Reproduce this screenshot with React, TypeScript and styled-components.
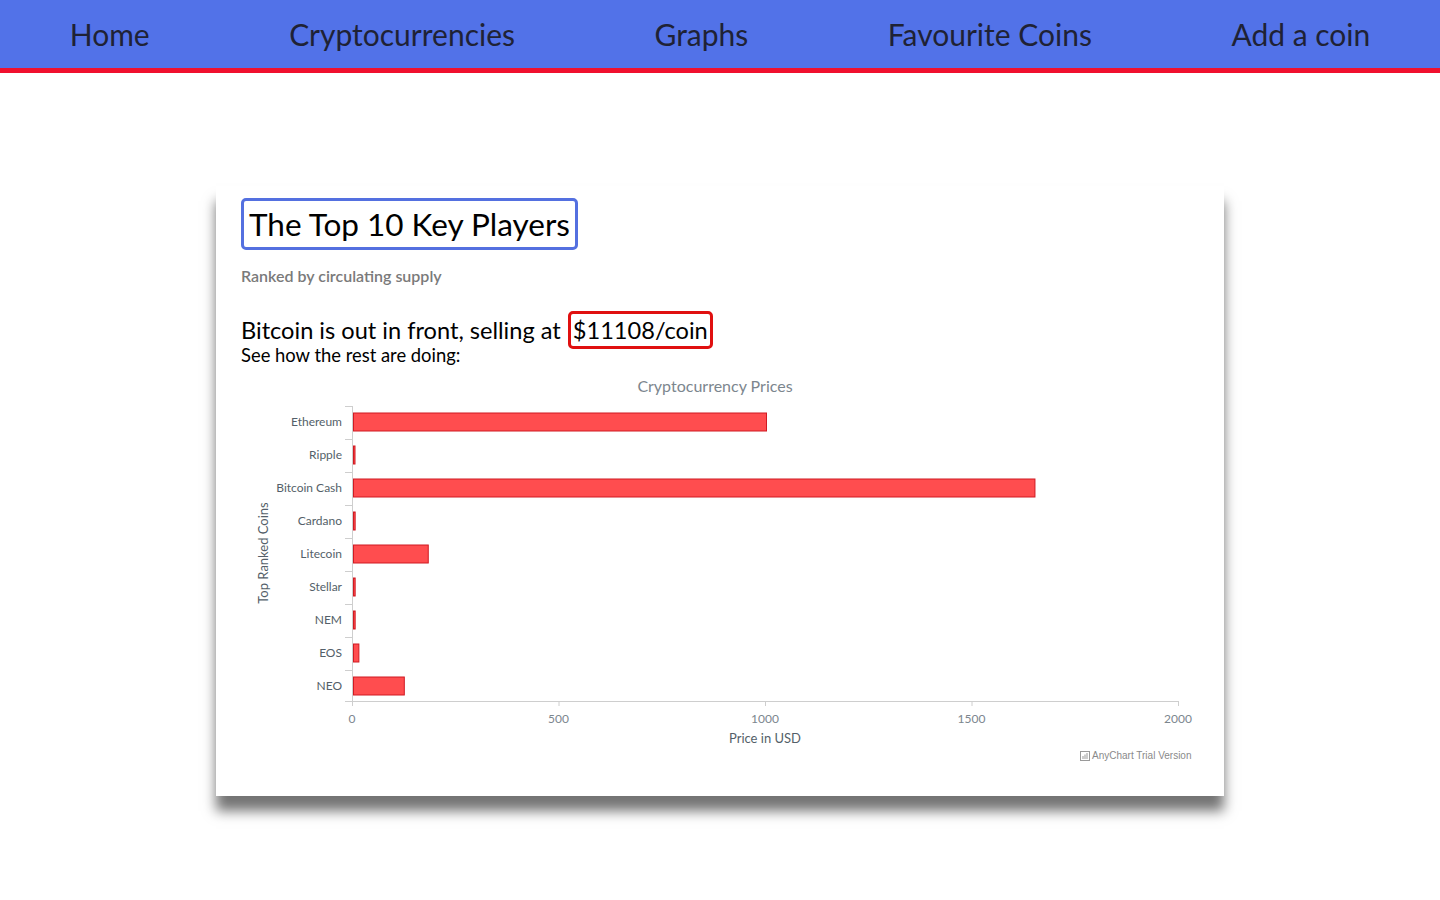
import React from "react";
import styled, { createGlobalStyle } from "styled-components";

const Global = createGlobalStyle`
  html, body { margin: 0; padding: 0; background: #ffffff; }
  body { font-family: Lato, "Open Sans", sans-serif; min-height: 900px; }
`;

const Nav = styled.nav`
  height: 68px;
  background: #5272e8;
  border-bottom: 5px solid #f0102e;
  display: flex;
  align-items: center;
  justify-content: space-around;
`;

const NavLink = styled.a`
  font-family: Lato, sans-serif;
  font-size: 30px;
  color: #1f2235;
  text-decoration: none;
  line-height: 1;
`;

const Main = styled.main`
  display: flex;
  justify-content: center;
  padding: 113px 0 100px;
`;

const Card = styled.section`
  width: 1008px;
  box-sizing: border-box;
  background: #fff;
  padding: 12px 25px 30px 25px;
  box-shadow: 0 15px 12px rgba(0, 0, 0, 0.55);
  display: flex;
  flex-direction: column;
  align-items: flex-start;
`;

const TitleBox = styled.h1`
  margin: 0;
  font-family: Lato, sans-serif;
  font-weight: 400;
  font-size: 31.5px;
  line-height: 46px;
  color: #000;
  border: 3px solid #5470e0;
  border-radius: 5px;
  padding: 0 5px;
`;

const Subtitle = styled.p`
  margin: 16px 0 0 0;
  font-family: Lato, sans-serif;
  font-weight: 600;
  font-size: 16px;
  line-height: 20px;
  color: #7a7a7a;
`;

const Lead = styled.div`
  margin-top: 25px;
  display: flex;
  align-items: center;
  gap: 7px;
  font-size: 23.6px;
  color: #000;
`;

const PriceBox = styled.span`
  border: 3px solid #e01010;
  border-radius: 5px;
  padding: 0 2px;
  line-height: 32px;
`;

const Sub = styled.div`
  margin-top: -5px;
  font-size: 18.4px;
  color: #000;
  line-height: 22px;
`;

const ChartWrap = styled.div`
  margin-top: 10px;
  width: 958px;
  height: 390px;
`;

const data = [
  { name: "Ethereum", value: 1000 },
  { name: "Ripple", value: 1.5 },
  { name: "Bitcoin Cash", value: 1650 },
  { name: "Cardano", value: 4 },
  { name: "Litecoin", value: 181 },
  { name: "Stellar", value: 4 },
  { name: "NEM", value: 4 },
  { name: "EOS", value: 13 },
  { name: "NEO", value: 123 },
];

const X0 = 111;
const Y0 = 30;
const ROW = 33;
const SCALE = 826 / 2000;
const AXIS_Y = Y0 + ROW * 9 - 2;

const Chart: React.FC = () => (
  <svg width="958" height="390" viewBox="0 0 958 390" fontFamily="Lato, sans-serif">
    <text x="474" y="12" textAnchor="middle" dominantBaseline="middle" fontSize="16" fill="#7c868e">
      Cryptocurrency Prices
    </text>
    <text
      x="24"
      y="177"
      textAnchor="middle"
      dominantBaseline="middle"
      fontSize="13"
      fill="#545f69"
      transform="rotate(-90 24 177)"
    >
      Top Ranked Coins
    </text>
    <line x1={X0 + 0.5} y1={Y0} x2={X0 + 0.5} y2={AXIS_Y} stroke="#cecece" />
    {data.map((d, i) => (
      <line
        key={"t" + i}
        x1={X0 - 7}
        x2={X0}
        y1={Y0 + i * ROW + 0.5}
        y2={Y0 + i * ROW + 0.5}
        stroke="#cecece"
      />
    ))}
    <line x1={X0 - 7} x2={X0 + 826} y1={AXIS_Y + 0.5} y2={AXIS_Y + 0.5} stroke="#cecece" />
    {[0, 500, 1000, 1500, 2000].map((v) => (
      <g key={v}>
        <line
          x1={X0 + v * SCALE + 0.5}
          x2={X0 + v * SCALE + 0.5}
          y1={AXIS_Y}
          y2={AXIS_Y + 5}
          stroke="#cecece"
        />
        <text
          x={X0 + v * SCALE}
          y={AXIS_Y + 19}
          textAnchor="middle"
          dominantBaseline="middle"
          fontSize="12"
          fill="#7c868e"
        >
          {v}
        </text>
      </g>
    ))}
    {data.map((d, i) => {
      const cy = Y0 + i * ROW + 16;
      const w = Math.max(1.5, d.value * SCALE);
      return (
        <g key={d.name}>
          <text x={X0 - 10} y={cy + 0.5} textAnchor="end" dominantBaseline="middle" fontSize="12" fill="#545f69">
            {d.name}
          </text>
          <rect x={X0 + 1.5} y={cy - 9} width={w} height={18} fill="#ff4d4f" stroke="#d01a22" strokeWidth="1" />
        </g>
      );
    })}
    <text x="524" y="364" textAnchor="middle" dominantBaseline="middle" fontSize="13" fill="#545f69">
      Price in USD
    </text>
    <g transform="translate(839 375)">
      <rect x="0.5" y="0.5" width="9" height="9" fill="none" stroke="#9a9a9a" />
      <rect x="2.5" y="5" width="1" height="3" fill="#9a9a9a" />
      <rect x="4.5" y="3.5" width="1" height="4.5" fill="#9a9a9a" />
      <rect x="6.5" y="2" width="1" height="6" fill="#9a9a9a" />
      <text x="12" y="5.5" dominantBaseline="middle" fontSize="10" fill="#8a8a8a" fontFamily="'Liberation Sans', Arial, sans-serif">
        AnyChart Trial Version
      </text>
    </g>
  </svg>
);

export default function App() {
  return (
    <>
      <Global />
      <Nav>
        <NavLink href="#">Home</NavLink>
        <NavLink href="#">Cryptocurrencies</NavLink>
        <NavLink href="#">Graphs</NavLink>
        <NavLink href="#">Favourite Coins</NavLink>
        <NavLink href="#">Add a coin</NavLink>
      </Nav>
      <Main>
        <Card>
          <TitleBox>The Top 10 Key Players</TitleBox>
          <Subtitle>Ranked by circulating supply</Subtitle>
          <Lead>
            <span>Bitcoin is out in front, selling at</span>
            <PriceBox>$11108/coin</PriceBox>
          </Lead>
          <Sub>See how the rest are doing:</Sub>
          <ChartWrap>
            <Chart />
          </ChartWrap>
        </Card>
      </Main>
    </>
  );
}
